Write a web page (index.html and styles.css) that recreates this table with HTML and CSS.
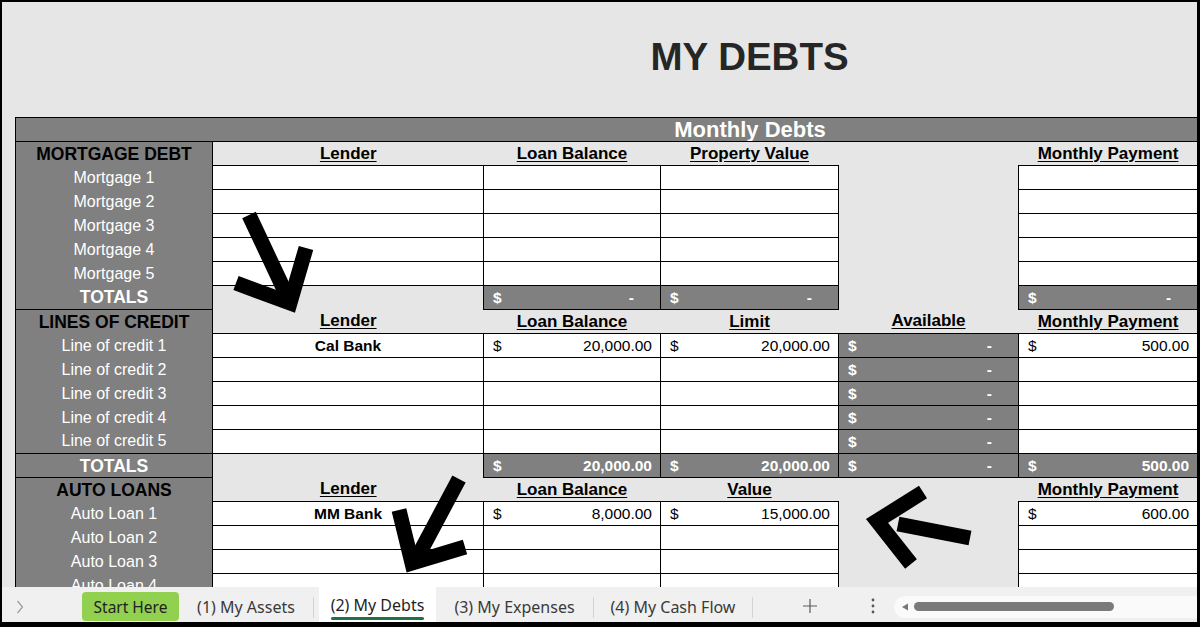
FILE: index.html
```html
<!DOCTYPE html>
<html>
<head>
<meta charset="utf-8">
<link rel="stylesheet" href="styles.css">
</head>
<body>
<div class="frame">
  <div class="sheet">
    <h1 class="title">MY DEBTS</h1>
    <table class="debts">
      <colgroup>
        <col class="c-lbl"><col class="c-lender"><col class="c-bal"><col class="c-val"><col class="c-avail"><col class="c-pay">
      </colgroup>
      <tr><td class="banner" colspan="6">Monthly Debts</td></tr>

      <tr><td class="lbl sec">MORTGAGE DEBT</td><td class="hd">Lender</td><td class="hd">Loan Balance</td><td class="hd">Property Value</td><td></td><td class="hd">Monthly Payment</td></tr>
      <tr><td class="lbl">Mortgage 1</td><td class="w"></td><td class="w"></td><td class="w"></td><td></td><td class="w"></td></tr>
      <tr><td class="lbl">Mortgage 2</td><td class="w"></td><td class="w"></td><td class="w"></td><td></td><td class="w"></td></tr>
      <tr><td class="lbl">Mortgage 3</td><td class="w"></td><td class="w"></td><td class="w"></td><td></td><td class="w"></td></tr>
      <tr><td class="lbl">Mortgage 4</td><td class="w"></td><td class="w"></td><td class="w"></td><td></td><td class="w"></td></tr>
      <tr><td class="lbl">Mortgage 5</td><td class="w"></td><td class="w"></td><td class="w"></td><td></td><td class="w"></td></tr>
      <tr><td class="lbl tot">TOTALS</td><td></td>
        <td class="g"><div class="money"><span>$</span><span class="dash">-</span></div></td>
        <td class="g"><div class="money"><span>$</span><span class="dash">-</span></div></td>
        <td></td>
        <td class="g"><div class="money"><span>$</span><span class="dash">-</span></div></td></tr>

      <tr><td class="lbl sec top">LINES OF CREDIT</td><td class="hd">Lender</td><td class="hd">Loan Balance</td><td class="hd">Limit</td><td class="hd">Available</td><td class="hd">Monthly Payment</td></tr>
      <tr><td class="lbl">Line of credit 1</td><td class="w name">Cal Bank</td>
        <td class="w"><div class="money"><span>$</span><span>20,000.00</span></div></td>
        <td class="w"><div class="money"><span>$</span><span>20,000.00</span></div></td>
        <td class="g"><div class="money"><span>$</span><span class="dash">-</span></div></td>
        <td class="w"><div class="money"><span>$</span><span>500.00</span></div></td></tr>
      <tr><td class="lbl">Line of credit 2</td><td class="w"></td><td class="w"></td><td class="w"></td>
        <td class="g"><div class="money"><span>$</span><span class="dash">-</span></div></td><td class="w"></td></tr>
      <tr><td class="lbl">Line of credit 3</td><td class="w"></td><td class="w"></td><td class="w"></td>
        <td class="g"><div class="money"><span>$</span><span class="dash">-</span></div></td><td class="w"></td></tr>
      <tr><td class="lbl">Line of credit 4</td><td class="w"></td><td class="w"></td><td class="w"></td>
        <td class="g"><div class="money"><span>$</span><span class="dash">-</span></div></td><td class="w"></td></tr>
      <tr><td class="lbl">Line of credit 5</td><td class="w"></td><td class="w"></td><td class="w"></td>
        <td class="g"><div class="money"><span>$</span><span class="dash">-</span></div></td><td class="w"></td></tr>
      <tr><td class="lbl tot top">TOTALS</td><td></td>
        <td class="g"><div class="money"><span>$</span><span>20,000.00</span></div></td>
        <td class="g"><div class="money"><span>$</span><span>20,000.00</span></div></td>
        <td class="g"><div class="money"><span>$</span><span class="dash">-</span></div></td>
        <td class="g"><div class="money"><span>$</span><span>500.00</span></div></td></tr>

      <tr><td class="lbl sec top">AUTO LOANS</td><td class="hd">Lender</td><td class="hd">Loan Balance</td><td class="hd">Value</td><td></td><td class="hd">Monthly Payment</td></tr>
      <tr><td class="lbl">Auto Loan 1</td><td class="w name">MM Bank</td>
        <td class="w"><div class="money"><span>$</span><span>8,000.00</span></div></td>
        <td class="w"><div class="money"><span>$</span><span>15,000.00</span></div></td>
        <td></td>
        <td class="w"><div class="money"><span>$</span><span>600.00</span></div></td></tr>
      <tr><td class="lbl">Auto Loan 2</td><td class="w"></td><td class="w"></td><td class="w"></td><td></td><td class="w"></td></tr>
      <tr><td class="lbl">Auto Loan 3</td><td class="w"></td><td class="w"></td><td class="w"></td><td></td><td class="w"></td></tr>
      <tr><td class="lbl">Auto Loan 4</td><td class="w"></td><td class="w"></td><td class="w"></td><td></td><td class="w"></td></tr>
    </table>

    <svg class="arrows" viewBox="2 2 1195 585" width="1195" height="585">
      <g fill="none" stroke="#000" stroke-width="15" stroke-linejoin="miter" stroke-miterlimit="10">
        <path d="M249,215 L288,298"/>
        <path d="M236,283 L290,303 L306,248"/>
        <path d="M459,479 L418,556"/>
        <path d="M399,510 L412,563 L465,547"/>
        <path d="M898,524 L970,538"/>
        <path d="M923,492 L877,521 L911,564"/>
      </g>
    </svg>
  </div>

  <div class="tabbar">
    <div class="nav">
      <svg width="8" height="14" viewBox="0 0 8 14"><path d="M1.5,1 L6.5,7 L1.5,13" fill="none" stroke="#9a9a9a" stroke-width="1.2"/></svg>
    </div>
    <div class="start">Start Here</div>
    <div class="tab t1">(1) My Assets</div>
    <div class="sep"></div>
    <div class="tab active"><span class="tab-label">(2) My Debts</span></div>
    <div class="tab t3">(3) My Expenses</div>
    <div class="sep"></div>
    <div class="tab t4">(4) My Cash Flow</div>
    <div class="sep"></div>
    <div class="add">
      <svg width="14" height="14" viewBox="0 0 14 14"><path d="M7,0 V14 M0,7 H14" stroke="#5a5a5a" stroke-width="1.2"/></svg>
    </div>
    <div class="more">
      <svg width="4" height="16" viewBox="0 0 4 16"><circle cx="2" cy="2" r="1.4" fill="#555"/><circle cx="2" cy="8" r="1.4" fill="#555"/><circle cx="2" cy="14" r="1.4" fill="#555"/></svg>
    </div>
    <div class="scroll">
      <svg class="scroll-arrow" width="8" height="8" viewBox="0 0 8 8"><path d="M1,4 L7,0.5 L7,7.5 Z" fill="#777"/></svg>
      <div class="thumb"></div>
    </div>
  </div>
</div>
</body>
</html>
```

FILE: styles.css
```css
* { box-sizing: border-box; }
html, body { margin: 0; padding: 0; }
body {
  width: 1200px;
  height: 627px;
  overflow: hidden;
  background: #000;
  font-family: "Liberation Sans", Arial, sans-serif;
}
.frame {
  width: 1200px;
  height: 627px;
  border-style: solid;
  border-color: #000;
  border-width: 2px 3px 5px 2px;
  display: flex;
  flex-direction: column;
}
.sheet {
  flex: none;
  height: 585px;
  overflow: hidden;
  background: #e6e6e6;
  position: relative;
}
.title {
  margin: 0;
  height: 115px;
  padding: 33px 0 0 300px;
  text-align: center;
  font-size: 38.5px;
  line-height: 44px;
  font-weight: bold;
  color: #262626;
}
.debts {
  margin-left: 13px;
  width: 1182px;
  table-layout: fixed;
  border-collapse: collapse;
}
.c-lbl { width: 197px; }
.c-lender { width: 271px; }
.c-bal { width: 177px; }
.c-val { width: 178px; }
.c-avail { width: 180px; }
.c-pay { width: 179px; }
.debts tr { height: 24px; }
.debts td {
  padding: 0;
  height: 24px;
  font-size: 15.5px;
  line-height: 18px;
  white-space: nowrap;
  overflow: hidden;
  color: #000;
}
.debts td.banner {
  background: #808080;
  border: 1px solid #000;
  color: #fff;
  font-weight: bold;
  font-size: 22px;
  line-height: 22px;
  text-align: center;
  padding-left: 287px;
}
.debts td.lbl {
  background: #808080;
  border-left: 1px solid #000;
  border-right: 1px solid #000;
  color: #fff;
  text-align: center;
  font-size: 16px;
}
.debts td.lbl.sec {
  color: #000;
  font-weight: bold;
  font-size: 17.5px;
}
.debts td.lbl.tot {
  font-weight: bold;
  font-size: 17.5px;
}
.debts td.lbl.top { border-top: 1px solid #000; }
.debts td.hd {
  text-align: center;
  font-weight: bold;
  font-size: 17px;
  text-decoration: underline;
  text-underline-offset: 2px;
}
.debts td.w {
  background: #fff;
  border: 1px solid #000;
}
.debts td.g {
  background: #808080;
  border: 1px solid #000;
  color: #fff;
  font-weight: bold;
}
.debts td.name {
  text-align: center;
  font-weight: bold;
}
.money {
  display: flex;
  justify-content: space-between;
  padding: 0 8px 0 9px;
}
.dash { padding-right: 18px; }
.arrows {
  position: absolute;
  left: 0;
  top: 0;
  pointer-events: none;
}

/* tab bar */
.tabbar {
  flex: none;
  height: 35px;
  background: #f0f0f0;
  display: flex;
  align-items: center;
  font-family: "Noto Sans", "Open Sans", sans-serif;
  font-size: 16px;
  color: #3a3a3a;
}
.nav {
  width: 80px;
  height: 35px;
  display: flex;
  align-items: center;
  padding: 5px 0 0 14px;
}
.nav svg { display: block; }
.start {
  width: 97px;
  height: 29px;
  margin-top: 5px;
  align-self: flex-start;
  background: #92d050;
  border-radius: 4px;
  color: #1f1f1f;
  display: flex;
  align-items: center;
  justify-content: center;
  font-size: 15.5px;
}
.tab {
  height: 35px;
  display: flex;
  align-items: center;
  justify-content: center;
  padding-top: 5px;
}
.t1 { width: 134px; }
.t3 { width: 157px; }
.t4 { width: 158px; }
.sep {
  width: 1px;
  height: 21px;
  margin-top: 6px;
  background: #d4d4d4;
}
.tab.active {
  width: 117px;
  margin-left: 5px;
  background: #fff;
  padding-top: 0;
  color: #1f1f1f;
}
.tab-label { position: relative; }
.tab-label::after {
  content: "";
  position: absolute;
  left: 0;
  right: 0;
  bottom: -4px;
  height: 3px;
  border-radius: 2px;
  background: #1e7145;
}
.add {
  width: 114px;
  height: 35px;
  display: flex;
  align-items: center;
  justify-content: center;
  padding-top: 2px;
}
.add svg, .more svg { display: block; }
.more {
  width: 12px;
  height: 35px;
  display: flex;
  align-items: center;
  justify-content: center;
  padding-top: 2px;
}
.scroll {
  flex: 1;
  margin-left: 15px;
  height: 22px;
  margin-top: 4px;
  background: #fafafa;
  border-radius: 11px 0 0 11px;
  display: flex;
  align-items: center;
  padding-left: 7px;
}
.scroll-arrow { display: block; }
.thumb {
  width: 200px;
  height: 9px;
  margin-left: 5px;
  background: #7a7a7a;
  border-radius: 5px;
}
```
